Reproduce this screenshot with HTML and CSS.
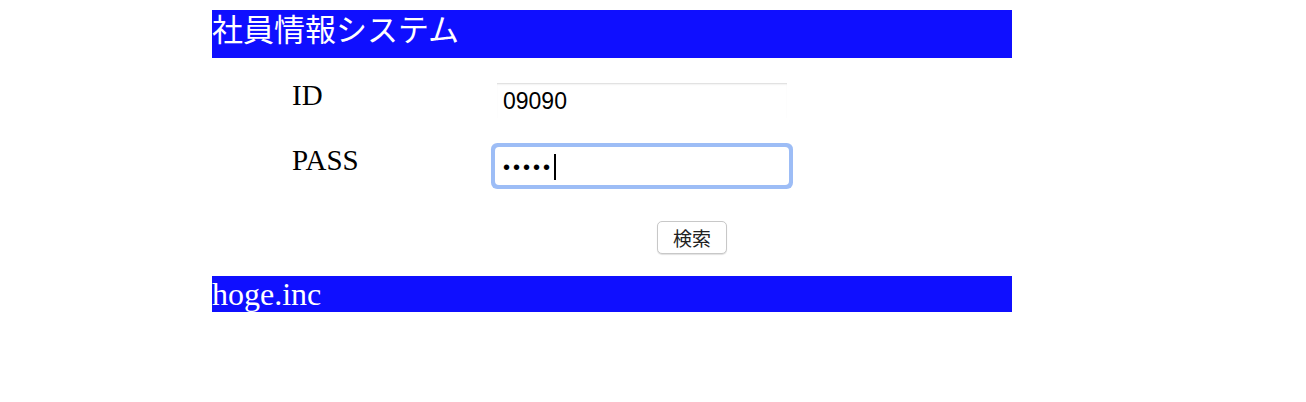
FILE: index.html
```html
<!DOCTYPE html>
<html lang="ja">
<head>
<meta charset="utf-8">
<title>社員情報システム</title>
<link rel="stylesheet" href="styles.css">
</head>
<body>
<div class="page">
  <header class="bar bar-head">社員情報システム</header>
  <form class="login">
    <div class="row">
      <label class="label" for="uid">ID</label>
      <input class="field" id="uid" type="text" value="09090">
    </div>
    <div class="row">
      <label class="label" for="pass">PASS</label>
      <div class="field-wrap">
        <input class="field focused" id="pass" type="password" value="aaaaa">
        <span class="caret"></span>
      </div>
    </div>
    <div class="actions">
      <button class="btn" type="button">検索</button>
    </div>
  </form>
  <footer class="bar bar-foot">hoge.inc</footer>
</div>
</body>
</html>
```
FILE: styles.css
```css
html, body {
  margin: 0;
  padding: 0;
  background: #fff;
}
.page {
  width: 800px;
  margin: 10px 0 0 212px;
  font-family: "Liberation Serif", "Noto Sans CJK JP", serif;
  color: #000;
}
.bar {
  background: #0f0fff;
  color: #fff;
  font-size: 32px;
}
.bar-head {
  height: 48px;
  line-height: 42px;
  font-family: "Liberation Serif", "Noto Sans CJK JP", serif;
  font-size: 31px;
  box-sizing: border-box;
}
.bar-foot {
  height: 36px;
  line-height: 36px;
}
.login {
  padding: 25px 0 0 80px;
  height: 218px;
  box-sizing: border-box;
}
.row {
  display: grid;
  grid-template-columns: 205px 290px;
  align-items: start;
  height: 65px;
}
.label {
  font-size: 29px;
  line-height: 30px;
  margin-top: -3px;
}
.field {
  width: 290px;
  height: 35px;
  box-sizing: border-box;
  border: none;
  margin: 0;
  padding: 2px 6px 0;
  font-family: "Liberation Sans", "DejaVu Sans", sans-serif;
  font-size: 23px;
  color: #000;
  background: #fff;
  box-shadow: inset 0 2px 2px -1px #d8d8d8;
  outline: none;
}
.field-wrap {
  position: relative;
  width: 290px;
  height: 35px;
  margin-top: 1px;
}
.field.focused {
  height: 34px;
  border-radius: 2px;
  box-shadow: 0 0 0 2px #fff, 0 0 0 6px #9dbdf6;
  font-size: 20px;
  letter-spacing: 3px;
}
.caret {
  position: absolute;
  left: 57px;
  top: 5px;
  width: 2px;
  height: 26px;
  background: #000;
}
.actions {
  display: flex;
  padding-left: 365px;
  margin-top: 8px;
}
.btn {
  width: 70px;
  height: 33px;
  background: #fff;
  border: 1px solid #c8c8c8;
  border-radius: 5px;
  box-shadow: 0 1px 1px rgba(0,0,0,0.12);
  font-family: "Noto Sans CJK JP", sans-serif;
  font-size: 19px;
  color: #222;
  padding: 0;
  line-height: 30px;
}
```
